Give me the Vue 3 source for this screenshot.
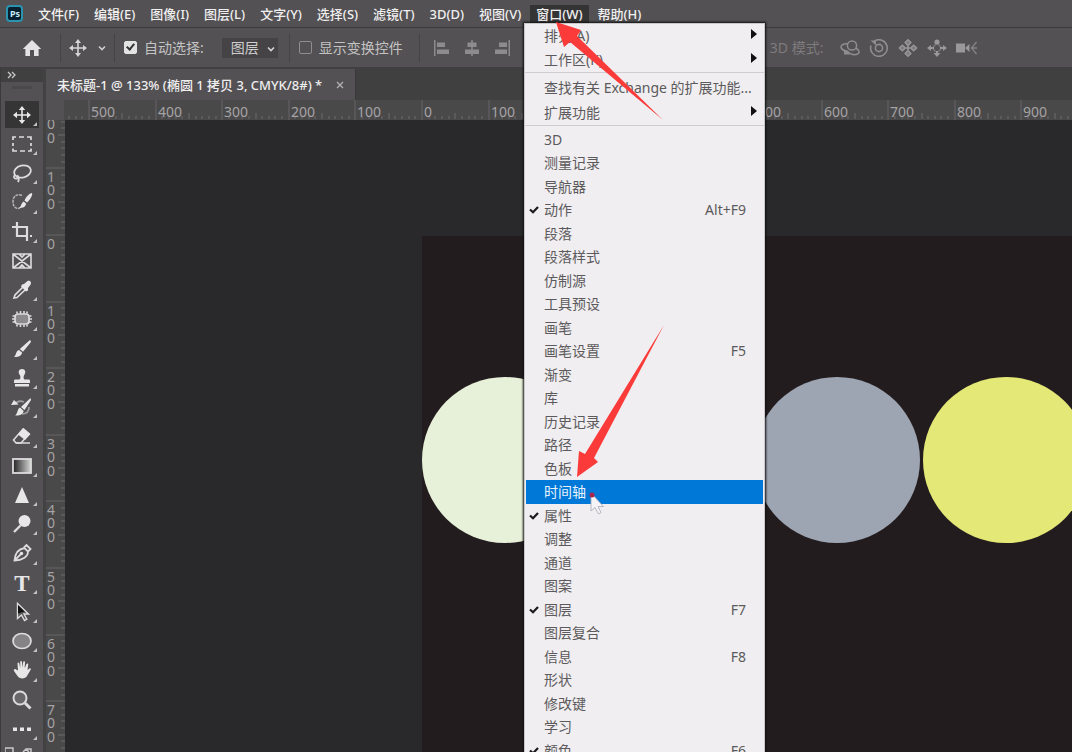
<script setup>
import { ref } from 'vue'

const menus = ['文件(F)', '编辑(E)', '图像(I)', '图层(L)', '文字(Y)', '选择(S)', '滤镜(T)', '3D(D)', '视图(V)', '窗口(W)', '帮助(H)']
const openMenu = '窗口(W)'

const autoSelect = ref(true)
const showTransform = ref(false)
const target = ref('图层')

const groups = [
  [
    { label: '排列(A)', sub: true },
    { label: '工作区(K)', sub: true }
  ],
  [
    { label: '查找有关 Exchange 的扩展功能...' },
    { label: '扩展功能', sub: true }
  ],
  [
    { label: '3D' },
    { label: '测量记录' },
    { label: '导航器' },
    { label: '动作', checked: true, key: 'Alt+F9' },
    { label: '段落' },
    { label: '段落样式' },
    { label: '仿制源' },
    { label: '工具预设' },
    { label: '画笔' },
    { label: '画笔设置', key: 'F5' },
    { label: '渐变' },
    { label: '库' },
    { label: '历史记录' },
    { label: '路径' },
    { label: '色板' },
    { label: '时间轴', active: true },
    { label: '属性', checked: true },
    { label: '调整' },
    { label: '通道' },
    { label: '图案' },
    { label: '图层', checked: true, key: 'F7' },
    { label: '图层复合' },
    { label: '信息', key: 'F8' },
    { label: '形状' },
    { label: '修改键' },
    { label: '学习' },
    { label: '颜色', checked: true, key: 'F6' }
  ]
]

const tools = [
  { id: 'move', name: '移动工具', more: true },
  { id: 'marquee', name: '矩形选框工具', more: true },
  { id: 'lasso', name: '套索工具', more: true },
  { id: 'quick', name: '快速选择工具', more: true },
  { id: 'crop', name: '裁剪工具', more: true },
  { id: 'frame', name: '图框工具' },
  { id: 'eyedropper', name: '吸管工具', more: true },
  { id: 'heal', name: '修补工具', more: true },
  { id: 'brush', name: '画笔工具', more: true },
  { id: 'stamp', name: '仿制图章工具', more: true },
  { id: 'history', name: '历史记录画笔工具', more: true },
  { id: 'eraser', name: '橡皮擦工具', more: true },
  { id: 'gradient', name: '渐变工具', more: true },
  { id: 'sharpen', name: '锐化工具', more: true },
  { id: 'dodge', name: '减淡工具', more: true },
  { id: 'pen', name: '钢笔工具', more: true },
  { id: 'type', name: '文字工具', more: true },
  { id: 'path', name: '路径选择工具', more: true },
  { id: 'ellipse', name: '椭圆工具', more: true },
  { id: 'hand', name: '抓手工具', more: true },
  { id: 'zoom', name: '缩放工具' },
  { id: 'dots', name: '编辑工具栏', more: true }
]

// Ruler marks: every 100 units takes 66.6 px at 133% zoom
const step = 66.6
const marks = (origin, from, to) => {
  const list = []
  for (let i = from; i <= to; i++) {
    const at = Math.round(origin + i * step)
    const minor = []
    for (let j = 1; j < 10; j++) minor.push({ at: Math.round(origin + (i + j / 10) * step), mid: j === 5 })
    list.push({ at, minor, text: String(Math.abs(i) * 100) })
  }
  return list
}
const hMarks = marks(376, -6, 9)
const vMarks = marks(115, -2, 7).map((m) => ({
  ...m,
  digits: [...m.text].map((c, k) => ({ c, y: m.at + 14 + Math.round(k * 13.4) })).filter((d) => d.y > 0)
}))
</script>

<template>
  <div class="app">
    <header class="menubar">
      <svg class="logo" width="18" height="18" viewBox="0 0 18 18" aria-hidden="true">
        <rect x="1" y="1" width="15" height="15" rx="3" fill="#06202f" stroke="#2a93ad" stroke-width="2" />
        <text x="4" y="12" class="logo-text">Ps</text>
      </svg>
      <nav class="menus">
        <button v-for="m in menus" :key="m" type="button" :class="['menu-btn', { open: m === openMenu }]">{{ m }}</button>
      </nav>
    </header>

    <div class="options">
      <button type="button" class="icon-btn home" aria-label="主页">
        <svg width="20" height="18" viewBox="0 0 20 18"><path d="M10 1 0.8 10H3.4V17H8V11H12V17H16.6V10H19.2Z" fill="#e4e3e4" /></svg>
      </button>
      <span class="rule"></span>
      <button type="button" class="icon-btn mover" aria-label="移动工具">
        <svg width="18" height="18" viewBox="0 0 18 18" fill="#d6d5d6"><path d="M8.2 3H9.8V8.2H15V9.8H9.8V15H8.2V9.8H3V8.2H8.2Z" /><path d="M9 0 12 4H6ZM9 18 6 14H12ZM0 9 4 6V12ZM18 9 14 12V6Z" /></svg>
        <svg width="8" height="6" viewBox="0 0 8 6"><path d="M1 1.5 4 4.5 7 1.5" fill="none" stroke="#cfcecf" stroke-width="1.6" /></svg>
      </button>
      <span class="rule"></span>
      <label class="check"><input v-model="autoSelect" type="checkbox" />自动选择:</label>
      <span class="select">
        <select v-model="target" aria-label="自动选择对象"><option>图层</option><option>组</option></select>
        <svg width="8" height="6" viewBox="0 0 8 6"><path d="M1 1.5 4 4.5 7 1.5" fill="none" stroke="#d6d5d6" stroke-width="1.6" /></svg>
      </span>
      <span class="rule"></span>
      <label class="check"><input v-model="showTransform" type="checkbox" />显示变换控件</label>
      <span class="rule"></span>
      <div class="aligns">
        <svg width="16" height="16" viewBox="0 0 16 16" fill="#8d8b8d"><path d="M0 0H1.5V16H0ZM3 2.5H11V7H3ZM3 9.5H15V14H3Z" /></svg>
        <svg width="16" height="16" viewBox="0 0 16 16" fill="#8d8b8d"><path d="M7.2 0H8.8V16H7.2ZM3.5 2.5H12.5V7H3.5ZM1 9.5H15V14H1Z" /></svg>
        <svg width="16" height="16" viewBox="0 0 16 16" fill="#8d8b8d"><path d="M14.5 0H16V16H14.5ZM5 2.5H13V7H5ZM1 9.5H13V14H1Z" /></svg>
      </div>
      <div class="mode">
        <span>3D 模式:</span>
        <svg width="20" height="18" viewBox="0 0 20 18" fill="none" stroke="#8f8d8f" stroke-width="1.5"><circle cx="12" cy="6.5" r="4.6" /><path d="M8 5C3 4 0 7 1.5 9.5S6 12 8.5 12.5M15.5 9C19.5 11 20.5 14 17 15.3S10 15 6 11.5" /><path d="M4 10.5 10.5 15.5H4Z" fill="#8f8d8f" stroke="none" /></svg>
        <svg width="20" height="18" viewBox="0 0 20 18" fill="none" stroke="#8f8d8f" stroke-width="1.6"><circle cx="10" cy="9" r="3.6" /><path d="M5.5 2A8.3 8.3 0 1 1 2 6.5" /><path d="M1.5 1.5H7V6.5Z" fill="#8f8d8f" stroke="none" /></svg>
        <svg width="20" height="18" viewBox="0 0 20 18" fill="#7c7a7c" stroke="#989698" stroke-width="1.5"><path d="M10 0.8 12.8 3.6 10 6.6 7.2 3.6ZM10 11.4 12.8 14.4 10 17.2 7.2 14.4ZM1.4 9 4.4 6.2 7.4 9 4.4 11.8ZM12.6 9 15.6 6.2 18.6 9 15.6 11.8Z" /><path d="M8 9H12M10 7V11" /></svg>
        <svg width="20" height="18" viewBox="0 0 20 18" fill="#9a989a"><circle cx="10" cy="3" r="2.6" /><circle cx="10" cy="9" r="3.5" fill="none" stroke="#807e80" stroke-width="1.2" /><path d="M0 9 4 6V8H7V10H4V12ZM20 9 16 12V10H13V8H16V6ZM10 18 6.5 14H9V12H11V14H13.5Z" /></svg>
        <svg width="22" height="18" viewBox="0 0 22 18" fill="#9a989a"><path d="M0 4.5H9V13.5H0ZM9 9 13.5 5V13Z" /><path d="M20.5 3 15.5 9 20.5 15M16 9H21" fill="none" stroke="#858385" stroke-width="1.3" /></svg>
      </div>
    </div>

    <div class="body">
      <aside class="toolbox">
        <div class="expand">
          <svg width="9" height="8" viewBox="0 0 9 8"><path d="M1 1 4 4 1 7M5 1 8 4 5 7" fill="none" stroke="#c9c8c9" stroke-width="1.3" /></svg>
        </div>
        <div class="panel">
          <div class="grip"></div>
          <div class="tools">
            <button v-for="(t, i) in tools" :key="t.id" type="button" :aria-label="t.name" :class="['tool', { current: i === 0, more: t.more }]">
              <svg width="24" height="24" viewBox="0 0 24 24" fill="none" stroke="#dddcdd" stroke-width="1.5">
                <g v-if="t.id === 'move'" fill="#e8e7e8" stroke="none"><path d="M11.2 5H12.8V11.2H19V12.8H12.8V19H11.2V12.8H5V11.2H11.2Z" /><path d="M12 3 15.2 7H8.8ZM12 21 8.8 17H15.2ZM3 12 7 8.8V15.2ZM21 12 17 15.2V8.8Z" /></g>
                <path v-else-if="t.id === 'marquee'" d="M3 8V5H6M9 5H14M17 5H21V8M21 11V14M21 16.5V19H18M15 19H10M7 19H3V16.5M3 14V11" stroke-width="1.7" />
                <g v-else-if="t.id === 'lasso'" stroke-width="1.8"><ellipse cx="12.5" cy="10.5" rx="8.5" ry="6" transform="rotate(-14 12.5 10.5)" /><path d="M5 14C3 15.5 4 18 6.5 17.5S9 15 7 14.5M8 17C9.5 18 8.5 20 8 21" /></g>
                <g v-else-if="t.id === 'quick'"><path d="M12 5.5C8 3.5 3 5.5 3 11.5S6.5 19.5 10 18" stroke-dasharray="3 0.8" stroke="#b5b4b5" /><path d="M22 3C23 5 20 10 17 12.5L14.5 10.5C16 7 19.5 3 22 3ZM13.7 11.5 16.2 13.8C15 17.5 13 18 9 18 11.5 16.5 11 13 13.7 11.5Z" fill="#e8e7e8" stroke="none" /></g>
                <path v-else-if="t.id === 'crop'" d="M7 2V16H18M2 7H17V21M20 16H22" stroke-width="2.2" />
                <path v-else-if="t.id === 'frame'" d="M3 5H21V19H3ZM3 5 21 19M21 5 3 19M9 5 12 8 15 5M9 19 12 16 15 19" stroke-width="1.6" />
                <g v-else-if="t.id === 'eyedropper'"><path d="M13 9 5 17 4 20 7 19.5 15.5 11.5" stroke-width="1.7" /><path d="M12 6.5 14 6 17.5 3C20 2 22 4.5 20.5 6.8L18 10 18 12.5 16 13.5 11 8.5Z" fill="#e8e7e8" stroke="none" /></g>
                <g v-else-if="t.id === 'heal'"><rect x="5" y="7" width="14" height="10" rx="3" fill="#8b898b" stroke-width="1.7" /><path d="M7 4.5V6.5M10.5 4V6.5M14 4V6.5M17 4.5V6.5M7 17.5V19.5M10.5 17.5V20M14 17.5V20M17 17.5V19.5M2.5 9H5M2 12H5M2.5 15H5M19 9H21.5M19 12H22M19 15H21.5" stroke-width="1.6" /></g>
                <path v-else-if="t.id === 'brush'" d="M20.5 3.5 12 14 10 12ZM20.5 3.5 21 5 13 14.8 9.8 12 20 3ZM9 13 12.2 15.8C11.5 19 8 20.5 4 20 6.5 18 5.5 14 9 13Z" fill="#e8e7e8" stroke="none" />
                <path v-else-if="t.id === 'stamp'" d="M12 3C8.5 3 8 6.5 9.5 8.5 11 10.5 10.5 13 9.5 13.5H5C4 13.5 4 14.5 4 17H20C20 14.5 20 13.5 19 13.5H14.5C13.5 13 13 10.5 14.5 8.5 16 6.5 15.5 3 12 3ZM5 18H19V20.5H5Z" fill="#e8e7e8" stroke="none" />
                <g v-else-if="t.id === 'history'"><path d="M5 9C8 5 12 6 14 7M19 12C19 17 16 19 12 19" stroke="#9f9d9f" stroke-width="1.7" /><path d="M1 10 4 5 8.5 9.5Z" fill="#e8e7e8" stroke="none" /><path d="M20.5 3 21 5 14.5 15 11 12ZM10 12.5 13.7 16C12.5 20 9 21 5 20.5 8 18.5 7 14 10 12.5Z" fill="#e8e7e8" stroke="none" /></g>
                <g v-else-if="t.id === 'eraser'"><path d="M13 5 19 10 11 19H6L3.5 16Z" stroke-width="1.6" /><path d="M13.5 4 20.5 10 15 16 8 10.5Z" fill="#e8e7e8" stroke="none" /><path d="M6 19H20" stroke-width="1.5" /></g>
                <g v-else-if="t.id === 'gradient'"><defs><linearGradient id="toolGradient"><stop offset="0" stop-color="#222" /><stop offset="1" stop-color="#d8d7d8" /></linearGradient></defs><rect x="3" y="5" width="18" height="14" fill="url(#toolGradient)" stroke-width="1.8" /></g>
                <path v-else-if="t.id === 'sharpen'" d="M12 4 19 20H5Z" fill="#e8e7e8" stroke="none" />
                <g v-else-if="t.id === 'dodge'"><circle cx="14.5" cy="9" r="6" fill="#e8e7e8" stroke="none" /><path d="M10.5 13.5 4 20" stroke-width="2.4" /></g>
                <g v-else-if="t.id === 'pen'"><path d="M4.5 19.5C5 13 8 8 14.5 7L18 10.5C18 16 12 19.5 4.5 19.5ZM14 6.5 16.5 4 20.5 8 18 10.5M5 19 10.5 13.5" stroke-width="1.8" /><circle cx="11.5" cy="12.5" r="1.7" fill="#e8e7e8" stroke="none" /></g>
                <text v-else-if="t.id === 'type'" x="12" y="20" text-anchor="middle" class="type-glyph">T</text>
                <g v-else-if="t.id === 'path'"><path d="M7.5 3.5V18.5L11.5 15 14.5 20.5 16.8 19.2 14 14H18.5Z" fill="#5a585a" stroke-width="1.4" /><path d="M8 5 14.5 11.5 8 13.5Z" fill="#111" stroke="none" /></g>
                <ellipse v-else-if="t.id === 'ellipse'" cx="12" cy="12" rx="9" ry="7.5" fill="#858385" stroke-width="1.7" />
                <path v-else-if="t.id === 'hand'" d="M8 12.5 7.5 5.5C7.5 4.3 9 4.3 9.3 5.5L10.2 10V4C10.3 2.8 11.9 2.8 12 4L12.3 9.8 13.2 4C13.5 2.9 15 3.1 15 4.3L14.7 10.3 16.5 6C17 5 18.5 5.5 18.2 6.7L17.5 12 19.5 10.5C20.8 10 21.5 11 20.5 12L17 18C15.5 21 9.5 21.5 7.5 18L4 13C3.2 11.5 5 10.5 6 11.5Z" fill="#e8e7e8" stroke="none" />
                <g v-else-if="t.id === 'zoom'"><circle cx="10" cy="10" r="6.5" fill="#696769" stroke-width="2" /><path d="M15 15 20.5 20.5" stroke-width="3" /></g>
                <path v-else d="M3 10.5H7V14H3ZM10 10.5H14V14H10ZM17 10.5H21V14H17Z" fill="#e8e7e8" stroke="none" />
              </svg>
            </button>
            <div class="swatches">
              <svg width="28" height="8" viewBox="0 0 28 8" fill="none" stroke="#c8c7c8" stroke-width="1.5"><path d="M0 6V2H8V7M18 6 21 3 24 6M21 3H26V8" /></svg>
            </div>
          </div>
        </div>
      </aside>

      <main class="document">
        <div class="tabs">
          <div class="tab">
            <span>未标题-1 @ 133% (椭圆 1 拷贝 3, CMYK/8#) *</span>
            <button type="button" class="close" aria-label="关闭">
              <svg width="8" height="8" viewBox="0 0 8 8"><path d="M1 1 7 7M7 1 1 7" stroke="#b5b4b5" stroke-width="1.2" /></svg>
            </button>
          </div>
        </div>
        <div class="stage">
          <svg class="h-ruler" width="100%" height="20">
            <g v-for="m in hMarks" :key="m.at">
              <path :d="`M${m.at} 0V20`" class="major" />
              <path v-for="n in m.minor" :key="n.at" :d="`M${n.at} ${n.mid ? 13 : 16}V19`" class="minor" />
              <text v-if="m.at > 0" :x="m.at + 2" y="17" class="ruler-text">{{ m.text }}</text>
            </g>
            <rect width="18" height="20" class="corner" />
          </svg>
          <svg class="v-ruler" width="19" height="100%">
            <g v-for="m in vMarks" :key="m.at">
              <path :d="`M0 ${m.at}H19`" class="major" />
              <path v-for="n in m.minor" :key="n.at" :d="`M${n.mid ? 12 : 15} ${n.at}H19`" class="minor" />
              <text v-for="d in m.digits" :key="d.y" x="1" :y="d.y" class="ruler-text">{{ d.c }}</text>
            </g>
          </svg>
          <svg class="canvas" width="100%" height="100%">
            <rect x="357" y="116" width="100%" height="100%" fill="#231c1e" />
            <circle cx="440" cy="340" r="83" fill="#e7f1d9" />
            <circle cx="772" cy="340" r="83" fill="#9da4b2" />
            <circle cx="941" cy="340" r="83" fill="#e4e877" />
          </svg>
        </div>
      </main>
    </div>

    <div class="dropdown" role="menu">
      <ul v-for="(g, gi) in groups" :key="gi" :class="['group', `group-${gi}`]">
        <li v-for="item in g" :key="item.label">
          <button type="button" role="menuitem" :class="['item', { active: item.active }]">
            <span class="tick">
              <svg v-if="item.checked" width="10" height="8" viewBox="0 0 10 8"><path d="M1 3.5 4 6.3 9 1" fill="none" stroke="#1c1b1c" stroke-width="2.2" /></svg>
            </span>
            <span class="label">{{ item.label }}</span>
            <span v-if="item.key" class="key">{{ item.key }}</span>
            <svg v-if="item.sub" class="arrow" width="6" height="10" viewBox="0 0 6 10"><path d="M0 0 6 5 0 10Z" fill="#111" /></svg>
          </button>
        </li>
      </ul>
    </div>

    <svg class="overlay" width="100%" height="100%" aria-hidden="true">
      <path d="M591 493V511L595 507.5 598.5 514 601 512.5 598 506.5H603.5Z" fill="#f6f4f6" stroke="#a3abb8" stroke-width="0.8" />
      <circle cx="592" cy="495" r="2.5" fill="#a8264c" />
      <path d="M556 22 581 30 577 36 663 120 570 42 564 47Z" fill="#fb3a3a" />
      <path d="M577 477 579 451 585 454 664 325 594 458 598 462Z" fill="#fb3a3a" />
    </svg>
  </div>
</template>

<style>
html,
body {
  background: #29292b;
  overflow: hidden;
}
</style>

<style scoped>
.app {
  position: relative;
  display: flex;
  flex-direction: column;
  height: 100vh;
  overflow: hidden;
  background: #29292b;
  color: #dddcdd;
  font: 14px/20px "Noto Sans", "Noto Sans CJK SC", sans-serif;
}
button {
  margin: 0;
  padding: 0;
  border: 0;
  background: none;
  color: inherit;
  font: inherit;
}
svg {
  display: block;
  flex: none;
}
.menubar {
  display: flex;
  align-items: center;
  flex: none;
  height: 27px;
  padding-left: 6px;
  background: #535153;
  border-bottom: 1px solid #3c3b3c;
}
.logo-text {
  fill: #c7ecf8;
  font: bold 9px "Noto Sans", sans-serif;
}
.menus {
  display: flex;
  gap: 3px;
  padding-left: 8px;
}
.menu-btn {
  padding: 0 6px;
  height: 18px;
  font-size: 13px;
  font-weight: 500;
  line-height: 18px;
  white-space: nowrap;
  color: #f0eff0;
}
.menu-btn.open {
  background: #353435;
}
.options {
  display: flex;
  align-items: center;
  flex: none;
  height: 39px;
  background: #535153;
  border-bottom: 2px solid #414041;
  color: #c4c3c4;
}
.rule {
  width: 1px;
  height: 28px;
  background: #464546;
  flex: none;
}
.icon-btn {
  display: flex;
  align-items: center;
}
.home {
  padding: 0 18px 0 22px;
}
.mover {
  gap: 11px;
  padding: 0 8px;
}
.check {
  display: flex;
  align-items: center;
  gap: 7px;
  padding-left: 9px;
  white-space: nowrap;
}
.check input {
  appearance: none;
  width: 13px;
  height: 13px;
  margin: 0;
  border: 1px solid #8f8e8f;
  border-radius: 2px;
}
.check input:checked {
  border-color: #e4e3e4;
  background: #e4e3e4;
}
.check input:checked::after {
  content: "";
  display: block;
  width: 3px;
  height: 6px;
  margin: 0 auto;
  border: solid #333;
  border-width: 0 2px 2px 0;
  transform: rotate(40deg);
}
.select {
  position: relative;
  margin: 0 11px 0 18px;
}
.select select {
  display: block;
  appearance: none;
  width: 56px;
  height: 20px;
  padding: 0 0 0 8px;
  border: 1px solid #454445;
  background: #454345;
  color: #cfcecf;
  font: inherit;
  line-height: 18px;
}
.select svg {
  position: absolute;
  right: 3px;
  top: 8px;
  pointer-events: none;
}
.check + .rule {
  margin-left: 16px;
}
.aligns {
  display: flex;
  gap: 14px;
  padding-left: 14px;
}
.mode {
  display: flex;
  align-items: center;
  gap: 9px;
  margin-left: 260px;
  color: #7d7b7d;
  white-space: nowrap;
}
.mode span {
  margin-right: 8px;
}
.body {
  display: flex;
  flex: 1;
  min-height: 0;
}
.toolbox {
  display: flex;
  flex-direction: column;
  flex: none;
  width: 42px;
  border-left: 1px solid #3b3a3b;
  border-right: 3px solid #434243;
}
.expand {
  height: 13px;
  padding: 2px 0 0 6px;
  box-sizing: border-box;
  background: #414041;
  flex: none;
}
.panel {
  flex: 1;
  background: #535153;
}
.grip {
  width: 20px;
  height: 3px;
  margin: 4px auto 11px;
  background: #4a494a;
}
.tools {
  display: flex;
  flex-direction: column;
  padding-left: 4px;
}
.tool {
  position: relative;
  display: flex;
  align-items: center;
  justify-content: center;
  width: 34px;
  height: 29px;
}
.tool:nth-child(4n) {
  height: 30px;
}
.tool.current {
  box-sizing: border-box;
  padding: 1px 0;
  background: #363536;
  background-clip: content-box;
}
.tool.more::after {
  content: "";
  position: absolute;
  right: 2px;
  bottom: 3px;
  border: 2px solid transparent;
  border-right-color: #c4c3c4;
  border-bottom-color: #c4c3c4;
}
.type-glyph {
  fill: #e8e7e8;
  stroke: none;
  font: bold 23px "Liberation Serif", serif;
}
.swatches {
  padding-top: 3px;
}
.document {
  display: flex;
  flex-direction: column;
  flex: 1;
  min-width: 0;
}
.tabs {
  display: flex;
  flex: none;
  height: 31px;
  background: #414041;
}
.tab {
  display: flex;
  align-items: center;
  gap: 14px;
  padding: 0 11px;
  border-right: 1px solid #393839;
  background: #535153;
  color: #efeeef;
  font-size: 13px;
  font-weight: 500;
  white-space: nowrap;
}
.stage {
  display: grid;
  grid-template: 20px minmax(0, 1fr) / 19px minmax(0, 1fr);
  flex: 1;
  min-height: 0;
}
.h-ruler {
  grid-column: 1 / 3;
  background: #4a494a;
}
.v-ruler {
  background: #4a494a;
}
.corner {
  fill: #535153;
}
.major {
  stroke: #666466;
}
.minor {
  stroke: #6d6b6d;
}
.ruler-text {
  fill: #a5a3a5;
  font: 14px "Noto Sans", sans-serif;
}
.dropdown {
  position: absolute;
  left: 524px;
  top: 23px;
  width: 239px;
  border: 1px solid #c9c7c9;
  box-shadow: 0 0 2px 1px #111;
  background: #f0eef0;
  color: #5c5a5c;
}
.group {
  margin: 0;
  padding: 0 1px;
  list-style: none;
}
.group + .group {
  padding-top: 2px;
  border-top: 1px solid #cfcdcf;
}
.item {
  display: flex;
  align-items: center;
  width: 100%;
  height: 24px;
  text-align: left;
  white-space: nowrap;
}
.group-1 .item {
  height: 25px;
}
.group-2 li:nth-child(odd) .item {
  height: 23px;
}
.item.active {
  background: #0078d7;
  color: #e9f2fb;
}
.tick {
  flex: none;
  width: 15px;
  padding-left: 3px;
}
.label {
  flex: 1;
}
.key {
  padding-right: 17px;
}
.arrow {
  margin: 0 6px 4px 0;
}
.overlay {
  position: absolute;
  inset: 0;
  pointer-events: none;
}
</style>
